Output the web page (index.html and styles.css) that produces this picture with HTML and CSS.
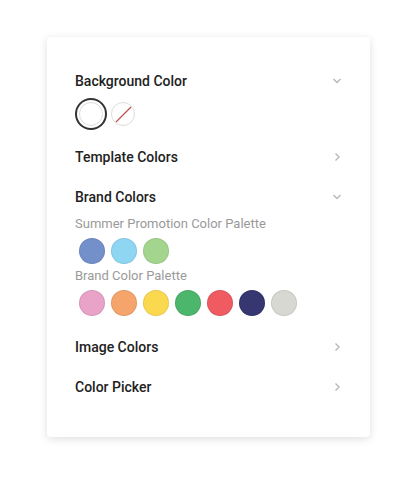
FILE: index.html
```html
<!DOCTYPE html>
<html lang="en">
<head>
  <meta charset="UTF-8">
  <meta name="viewport" content="width=device-width, initial-scale=1.0">
  <title>Color Panel</title>
  <link rel="stylesheet" href="styles.css">
</head>
<body>
  <div class="panel">
    <div class="section open bg">
      <div class="section-head">
        <span>Background Color</span>
        <svg class="chev" width="10" height="6" viewBox="0 0 10 6"><path d="M1.5 1l3.5 3.5 3.5-3.5" fill="none" stroke="#b8b8b8" stroke-width="1.4"/></svg>
      </div>
      <div class="swatches bg-swatches">
        <span class="swatch white selected"></span>
        <span class="swatch none">
          <svg width="22" height="22" viewBox="0 0 22 22"><path d="M4 19L19 4" stroke="#c0504d" stroke-width="1.2"/></svg>
        </span>
      </div>
    </div>

    <div class="section">
      <div class="section-head">
        <span>Template Colors</span>
        <svg class="chev" width="10" height="10" viewBox="0 0 10 10"><path d="M3.5 1.5l3.5 3.5-3.5 3.5" fill="none" stroke="#b8b8b8" stroke-width="1.4"/></svg>
      </div>
    </div>

    <div class="section open">
      <div class="section-head">
        <span>Brand Colors</span>
        <svg class="chev" width="10" height="6" viewBox="0 0 10 6"><path d="M1.5 1l3.5 3.5 3.5-3.5" fill="none" stroke="#b8b8b8" stroke-width="1.4"/></svg>
      </div>
      <div class="palette">
        <div class="palette-name">Summer Promotion Color Palette</div>
        <div class="swatches">
          <span class="swatch c-blue"></span>
          <span class="swatch c-sky"></span>
          <span class="swatch c-green"></span>
        </div>
      </div>
      <div class="palette">
        <div class="palette-name">Brand Color Palette</div>
        <div class="swatches">
          <span class="swatch c-pink"></span>
          <span class="swatch c-orange"></span>
          <span class="swatch c-yellow"></span>
          <span class="swatch c-emerald"></span>
          <span class="swatch c-red"></span>
          <span class="swatch c-navy"></span>
          <span class="swatch c-grey"></span>
        </div>
      </div>
    </div>

    <div class="section">
      <div class="section-head">
        <span>Image Colors</span>
        <svg class="chev" width="10" height="10" viewBox="0 0 10 10"><path d="M3.5 1.5l3.5 3.5-3.5 3.5" fill="none" stroke="#b8b8b8" stroke-width="1.4"/></svg>
      </div>
    </div>

    <div class="section">
      <div class="section-head">
        <span>Color Picker</span>
        <svg class="chev" width="10" height="10" viewBox="0 0 10 10"><path d="M3.5 1.5l3.5 3.5-3.5 3.5" fill="none" stroke="#b8b8b8" stroke-width="1.4"/></svg>
      </div>
    </div>
  </div>
</body>
</html>
```

FILE: styles.css
```css
* {
  margin: 0;
  padding: 0;
  box-sizing: border-box;
}

body {
  font-family: Roboto, 'Liberation Sans', sans-serif;
  background: #fff;
  color: #222;
  min-height: 100vh;
  padding: 37px 0 0 47px;
}

.panel {
  width: 323px;
  height: 400px;
  background: #fff;
  border-radius: 4px;
  box-shadow: 0 2px 8px rgba(0, 0, 0, 0.13);
  padding: 28px 28px 0 28px;
  display: flex;
  flex-direction: column;
  gap: 8px;
}

.section.open {
  padding-bottom: 5px;
}

.section.bg {
  padding-bottom: 3px;
}

.section-head {
  height: 32px;
  display: flex;
  align-items: center;
  justify-content: space-between;
  font-size: 14px;
  font-weight: 500;
  color: #222;
}

.chev {
  display: block;
}

.swatches {
  display: flex;
  gap: 6px;
  padding-left: 4px;
}

.bg-swatches {
  height: 32px;
  align-items: center;
  gap: 8px;
  margin-top: 1px;
}

.swatch {
  width: 26px;
  height: 26px;
  border-radius: 50%;
  border: 1px solid rgba(0, 0, 0, 0.08);
  display: flex;
  align-items: center;
  justify-content: center;
}

.bg-swatches .swatch {
  width: 24px;
  height: 24px;
  border-color: #ddd;
  background: #fff;
}

.swatch.selected {
  box-shadow: 0 0 0 2px #fff, 0 0 0 4px #333;
}

.palette {
  margin-bottom: 2px;
}

.palette-name {
  font-size: 13px;
  line-height: 20px;
  color: #9a9a9a;
  margin-top: 1px;
  margin-bottom: 4px;
}

.c-blue { background: #7490cb; }
.c-sky { background: #8ed6f2; }
.c-green { background: #a4d58e; }
.c-pink { background: #e9a2c8; }
.c-orange { background: #f5a46b; }
.c-yellow { background: #fbd94f; }
.c-emerald { background: #4cb66c; }
.c-red { background: #ef5b61; }
.c-navy { background: #363670; }
.c-grey { background: #d8d8d2; }
```
